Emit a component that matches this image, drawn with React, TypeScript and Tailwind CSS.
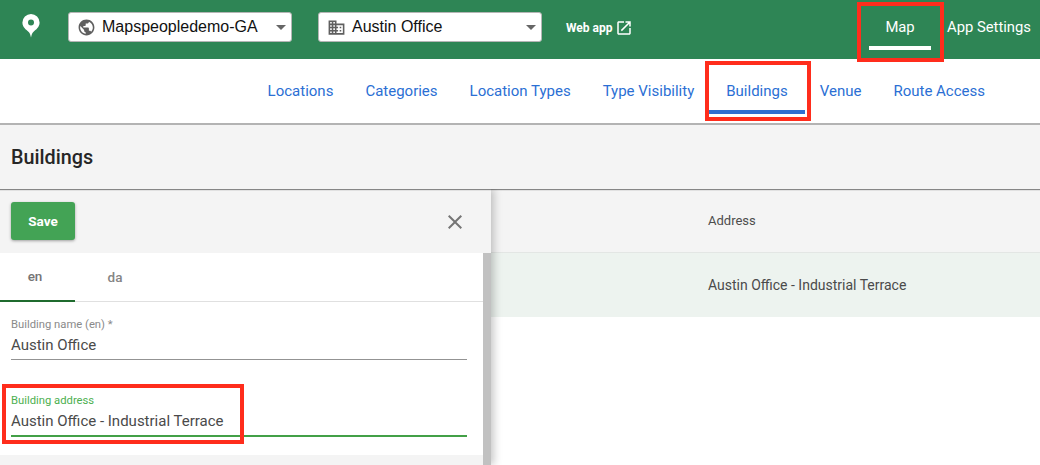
const F = "[font-family:Roboto,sans-serif]";

function Icon({ d, className }: { d: string; className: string }) {
  return (
    <svg viewBox="0 0 24 24" className={className} fill="currentColor">
      <path d={d} />
    </svg>
  );
}

const GLOBE = "M12 2C6.48 2 2 6.48 2 12s4.48 10 10 10 10-4.48 10-10S17.52 2 12 2zm-1 17.93c-3.95-.49-7-3.85-7-7.93 0-.62.08-1.21.21-1.79L9 15v1c0 1.1.9 2 2 2v1.93zm6.9-2.54c-.26-.81-1-1.39-1.9-1.39h-1v-3c0-.55-.45-1-1-1H8v-2h2c.55 0 1-.45 1-1V7h2c1.1 0 2-.9 2-2v-.41c2.93 1.19 5 4.06 5 7.41 0 2.08-.8 3.97-2.1 5.39z";
const DOMAIN = "M12 7V3H2v18h20V7H12zM6 19H4v-2h2v2zm0-4H4v-2h2v2zm0-4H4V9h2v2zm0-4H4V5h2v2zm4 12H8v-2h2v2zm0-4H8v-2h2v2zm0-4H8V9h2v2zm0-4H8V5h2v2zm10 12h-8v-2h2v-2h-2v-2h2v-2h-2V9h8v10zm-2-8h-2v2h2v-2zm0 4h-2v2h2v-2z";
const OPEN = "M19 19H5V5h7V3H5c-1.11 0-2 .9-2 2v14c0 1.1.89 2 2 2h14c1.1 0 2-.9 2-2v-7h-2v7zM14 3v2h3.59l-9.83 9.83 1.41 1.41L19 6.41V10h2V3h-7z";
const CLOSE = "M19 6.41L17.59 5 12 10.59 6.41 5 5 6.41 10.59 12 5 17.59 6.41 19 12 13.41 17.59 19 19 17.59 13.41 12z";

function Select({ icon, label, className }: { icon: string; label: string; className: string }) {
  return (
    <div className={`flex h-[30px] w-[224px] items-center rounded-[3px] border border-[#b5b5b5] bg-white pl-[8px] pr-[5px] ${className}`}>
      <Icon d={icon} className="h-[19px] w-[19px] shrink-0 text-[#5f5f5f]" />
      <span className="ml-[6px] flex-1 whitespace-nowrap text-[16px] leading-none text-[#111] [font-family:'Liberation_Sans',sans-serif]">{label}</span>
      <span className="h-0 w-0 border-x-[5px] border-t-[5px] border-x-transparent border-t-[#666]" />
    </div>
  );
}

function NavTab({ label, active }: { label: string; active?: boolean }) {
  return (
    <div className={`flex h-[64px] items-center justify-center px-[16px] pt-[1px] text-[15px] font-normal leading-none text-[#2b6fd4] ${active ? "relative" : ""}`}>
      {label}
      {active && <span className="absolute bottom-[9px] left-[-1px] right-[-1px] h-[4px] bg-[#2f6fd0]" />}
    </div>
  );
}

function Field({ label, value, active }: { label: string; value: string; active?: boolean }) {
  return (
    <div className="flex flex-col">
      <span className={`text-[11.25px] leading-[14px] ${active ? "text-[#4caf50]" : "text-[#8a8a8a]"}`}>{label}</span>
      <span className="mt-[3px] text-[15px] leading-[20px] text-[#4a4a4a]">{value}</span>
      <span className={`mt-[4px] w-full ${active ? "h-[2px] bg-[#43a047]" : "h-px bg-[#939393]"}`} />
    </div>
  );
}

export default function App() {
  return (
    <div className={`relative flex h-[465px] w-[1040px] flex-col overflow-hidden bg-white ${F}`}>
      {/* Top bar */}
      <header className="flex h-[59px] shrink-0 items-start bg-[#2e8555] text-white">
        <svg viewBox="0 0 18 24" className="ml-[22px] mt-[14px] h-[24px] w-[18px]">
          <path fill="#fff" fillRule="evenodd" d="M9 0a8.6 8.6 0 0 1 8.6 8.6c0 4.6-3.6 7.2-6.3 9.3C10 19 9.6 21 9 23.6 8.4 21 8 19 6.7 17.9 4 15.8.4 13.2.4 8.6A8.6 8.6 0 0 1 9 0zm0 5.6a3 3 0 1 0 0 6 3 3 0 0 0 0-6z" />
        </svg>
        <Select icon={GLOBE} label="Mapspeopledemo-GA" className="ml-[28px] mt-[12px]" />
        <Select icon={DOMAIN} label="Austin Office" className="ml-[26px] mt-[12px]" />
        <div className="ml-[24px] mt-[19px] flex items-center text-[12px] font-bold leading-[14px]">
          Web app
          <Icon d={OPEN} className="ml-[3px] h-[18px] w-[18px]" />
        </div>
        <div className="ml-auto flex">
          <div className="flex h-[50px] w-[62px] flex-col items-center border-b-4 border-white pt-[18px] text-[14.8px] leading-[18px]">Map</div>
          <div className="ml-[16px] mr-[9px] pt-[18px] text-[14.8px] leading-[18px]">App Settings</div>
        </div>
      </header>

      {/* Sub navigation */}
      <nav className="flex h-[66px] shrink-0 items-start justify-end border-b-2 border-[#b3b3b3] bg-white pr-[39px]">
        <NavTab label="Locations" />
        <NavTab label="Categories" />
        <NavTab label="Location Types" />
        <NavTab label="Type Visibility" />
        <NavTab label="Buildings" active />
        <NavTab label="Venue" />
        <NavTab label="Route Access" />
      </nav>

      {/* Title */}
      <div className="relative z-20 flex h-[64px] shrink-0 items-center bg-[#f4f4f4] pl-[11px] pt-[1px] text-[19.8px] font-medium text-[#262626] shadow-[0_1px_1px_rgba(0,0,0,0.45)]">
        Buildings
      </div>

      {/* Content */}
      <main className="flex min-h-0 flex-1">
        <aside className="relative z-10 flex w-[491px] shrink-0 flex-col bg-[#f4f4f4] shadow-[3px_0_8px_rgba(0,0,0,0.22)]">
          <div className="flex h-[64px] shrink-0 items-start justify-between">
            <button className="ml-[11px] mt-[13px] h-[38px] w-[64px] rounded-[3px] bg-[#43a355] text-[13.5px] font-bold text-white shadow-[0_1px_3px_rgba(0,0,0,0.35)]">
              Save
            </button>
            <Icon d={CLOSE} className="mr-[24px] mt-[21px] h-[24px] w-[24px] text-[#757575]" />
          </div>
          <div className="flex min-h-0 flex-1">
            <div className="flex flex-1 flex-col">
              <div className="h-[202px] bg-white">
                <div className="flex h-[49px] border-b border-[#e0e0e0] text-[13.5px] font-medium">
                  <div className="flex h-[49px] w-[75px] items-center justify-center border-b-2 border-[#1f6b2e] pr-[5px] text-[#757575]">en</div>
                  <div className="flex h-[48px] w-[80px] items-center justify-center text-[#858585]">da</div>
                </div>
                <div className="flex flex-col gap-[34px] pl-[11px] pr-[16px] pt-[16px]">
                  <Field label="Building name (en) *" value="Austin Office" />
                  <Field label="Building address" value="Austin Office - Industrial Terrace" active />
                </div>
              </div>
            </div>
            <div className="w-[8px] shrink-0 bg-[#c1c1c1]" />
          </div>
        </aside>

        <section className="flex min-w-0 flex-1 flex-col bg-white">
          <div className="flex h-[64px] shrink-0 items-center border-b border-[#e3e6e4] bg-[#f4f4f4] pl-[217px] pt-[1px] text-[13px] text-[#4d4d4d]">
            Address
          </div>
          <div className="flex h-[64px] shrink-0 items-center bg-[#edf3ef] pl-[217px] text-[14px] text-[#4a4a4a]">
            Austin Office - Industrial Terrace
          </div>
        </section>
      </main>

      {/* Annotation highlights */}
      <div className="pointer-events-none absolute left-[857px] top-[2px] z-30 h-[60px] w-[87px] border-4 border-[#ff2d1c]" />
      <div className="pointer-events-none absolute left-[705px] top-[61px] z-30 h-[60px] w-[106px] border-4 border-[#ff2d1c]" />
      <div className="pointer-events-none absolute left-[2px] top-[384px] z-30 h-[60px] w-[242px] border-4 border-[#ff2d1c]" />
    </div>
  );
}
